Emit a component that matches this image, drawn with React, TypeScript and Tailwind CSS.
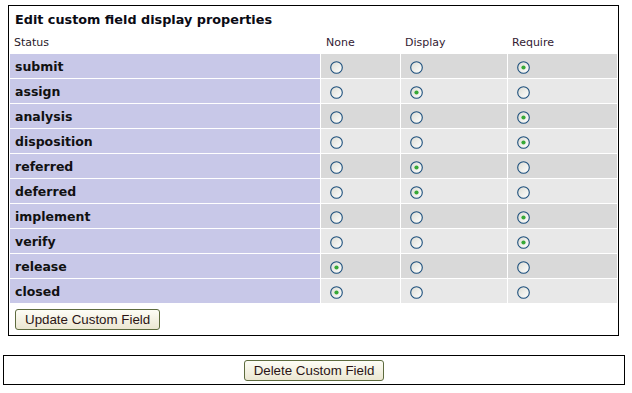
const rows: { name: string; value: 'none' | 'display' | 'require' }[] = [
  { name: 'submit', value: 'require' },
  { name: 'assign', value: 'display' },
  { name: 'analysis', value: 'require' },
  { name: 'disposition', value: 'require' },
  { name: 'referred', value: 'display' },
  { name: 'deferred', value: 'display' },
  { name: 'implement', value: 'require' },
  { name: 'verify', value: 'require' },
  { name: 'release', value: 'none' },
  { name: 'closed', value: 'none' },
];

function Radio({ checked }: { checked: boolean }) {
  return (
    <svg width="13" height="13" viewBox="0 0 13 13" className="block">
      <defs>
        <linearGradient id="rg" x1="0" y1="0" x2="1" y2="1">
          <stop offset="0" stopColor="#dcdcd4" />
          <stop offset="1" stopColor="#ffffff" />
        </linearGradient>
      </defs>
      <circle cx="6.5" cy="6.5" r="5.8" fill="url(#rg)" stroke="#1c4f7c" strokeWidth="1.1" />
      {checked && <circle cx="6.5" cy="6.5" r="2.1" fill="#36a836" />}
    </svg>
  );
}

function XpButton({ children }: { children: React.ReactNode }) {
  return (
    <button
      type="button"
      className="block h-[21px] rounded-[3px] border border-[#5d6b3e] bg-gradient-to-b from-[#fdfdf6] to-[#ebe7d2] px-[9px] text-[13.33px] leading-[19px] text-[#2a1414] font-['Liberation_Sans',Arial,sans-serif]"
    >
      {children}
    </button>
  );
}

export default function App() {
  return (
    <div className="min-h-screen bg-white font-['DejaVu_Sans',Verdana,sans-serif] pt-[5px]">
      <div className="ml-[8px] w-[611px] border border-black">
        <table className="w-[609px] border-separate border-spacing-[1px] table-fixed">
          <colgroup>
            <col className="w-[310px]" />
            <col className="w-[79px]" />
            <col className="w-[106px]" />
            <col className="w-[109px]" />
          </colgroup>
          <tbody>
            <tr className="h-[22px]">
              <td colSpan={4} className="pl-[5px] pt-[5px] text-[12.8px] leading-[16px] font-bold text-[#0a0a14] align-top">
                Edit custom field display properties
              </td>
            </tr>
            <tr className="h-[23px] text-[11px] leading-[13px] text-[#2a1a2a]">
              <td className="pl-[4px] pt-[6px] align-top">Status</td>
              <td className="pl-[5px] pt-[6px] align-top text-[#331a33]">None</td>
              <td className="pl-[4px] pt-[6px] align-top text-[#331a33]">Display</td>
              <td className="pl-[4px] pt-[6px] align-top text-[#331a33]">Require</td>
            </tr>
            {rows.map((r, i) => {
              const bg = i % 2 === 0 ? 'bg-[#d9d9d9]' : 'bg-[#e8e8e8]';
              return (
                <tr key={r.name} className="h-[24px]">
                  <td className="bg-[#c8c8e8] pl-[5px] pt-[2px] text-[12.5px] font-bold text-[#111] align-middle">
                    {r.name}
                  </td>
                  {(['none', 'display', 'require'] as const).map((v) => (
                    <td key={v} className={`${bg} pl-[9px] pt-[2px] align-middle`}>
                      <Radio checked={r.value === v} />
                    </td>
                  ))}
                </tr>
              );
            })}
          </tbody>
        </table>
        <div className="pl-[6px] pt-[5px] pb-[5px]">
          <XpButton>Update Custom Field</XpButton>
        </div>
      </div>
      <div className="ml-[3px] mt-[19px] flex h-[30px] w-[622px] justify-center border border-black pt-[4px]">
        <XpButton>Delete Custom Field</XpButton>
      </div>
    </div>
  );
}
